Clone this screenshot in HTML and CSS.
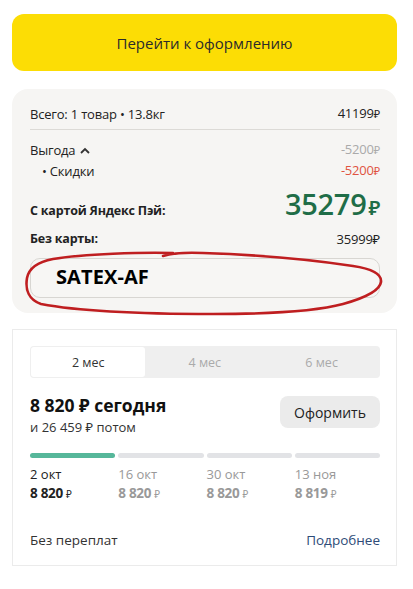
FILE: index.html
```html
<!DOCTYPE html>
<html lang="ru">
<head>
<meta charset="utf-8">
<link rel="stylesheet" href="styles.css">
</head>
<body>
<div class="page">
  <button class="cta">Перейти к оформлению</button>

  <section class="summary">
    <div class="row total">
      <span>Всего: 1 товар • 13.8кг</span>
      <span>41199<span class="rub">₽</span></span>
    </div>
    <div class="divider"></div>
    <div class="row benefit">
      <span>Выгода <svg class="caret" width="10" height="7" viewBox="0 0 10 7"><path d="M1 6 L5 2 L9 6" fill="none" stroke="#333" stroke-width="1.8"/></svg></span>
      <span class="grey">-5200<span class="rub">₽</span></span>
    </div>
    <div class="row sub">
      <span>• Скидки</span>
      <span class="red">-5200<span class="rub">₽</span></span>
    </div>
    <div class="row card-price">
      <span class="bold">С картой Яндекс Пэй:</span>
      <span class="big">35279<span class="bigrub">₽</span></span>
    </div>
    <div class="row nocard">
      <span class="bold">Без карты:</span>
      <span>35999₽</span>
    </div>
    <div class="promo">
      <div class="input">SATEX-AF</div>
      <svg class="circle" width="364" height="70" viewBox="0 0 364 70">
        <path d="M150 3 C120 2 60 4 30 9 C14 12 6 18 4 28 C2 40 6 50 18 54 C60 62 120 64 190 64 C240 64 290 62 320 54 C345 47 357 40 358 32 C359 24 350 19 330 16 C290 10 240 5 180 3 C160 2 150 3 140 6" fill="none" stroke="#bf1e20" stroke-width="2.6" stroke-linecap="round" stroke-linejoin="round"/>
      </svg>
    </div>
  </section>

  <section class="split">
    <div class="tabs">
      <div class="tab active">2 мес</div>
      <div class="tab">4 мес</div>
      <div class="tab">6 мес</div>
    </div>
    <div class="today">
      <div>
        <div class="title">8 820 ₽ сегодня</div>
        <div class="later">и 26 459 ₽ потом</div>
      </div>
      <button class="order">Оформить</button>
    </div>
    <div class="bars">
      <div class="bar on"></div>
      <div class="bar"></div>
      <div class="bar"></div>
      <div class="bar"></div>
    </div>
    <div class="dates">
      <div class="pay first"><div class="d">2 окт</div><div class="a">8 820 <span class="rub">₽</span></div></div>
      <div class="pay"><div class="d">16 окт</div><div class="a">8 820 <span class="rub">₽</span></div></div>
      <div class="pay"><div class="d">30 окт</div><div class="a">8 820 <span class="rub">₽</span></div></div>
      <div class="pay"><div class="d">13 ноя</div><div class="a">8 819 <span class="rub">₽</span></div></div>
    </div>
    <div class="foot">
      <span>Без переплат</span>
      <a class="more">Подробнее</a>
    </div>
  </section>
</div>
</body>
</html>
```

FILE: styles.css
```css
* { box-sizing: border-box; }
body {
  margin: 0;
  background: #fff;
  font-family: "Open Sans", "Noto Sans", sans-serif;
  color: #222;
}
.page { padding: 14px 16px 0 12px; }

.cta {
  display: block;
  width: 100%;
  height: 57px;
  border: 0;
  border-radius: 12px;
  background: #fcdd05;
  font-family: inherit;
  font-size: 15px;
  color: #2b2b2b;
}

.summary {
  position: relative;
  margin-top: 18px;
  background: #f6f5f3;
  border-radius: 16px;
  padding: 14px 17px 15px 18px;
}
.row {
  display: flex;
  justify-content: space-between;
  align-items: center;
  font-size: 13px;
  line-height: 20px;
  letter-spacing: -0.2px;
}
.rub { font-size: 11px; }
.divider { height: 1px; background: #dcdad6; margin: 5px 0 9px; }
.caret { margin-left: 2px; vertical-align: 1px; }
.grey { color: #aaa; }
.red { color: #e0533f; }
.sub { padding-left: 12px; }
.card-price { margin-top: 14px; }
.bold { font-weight: 700; font-size: 12.5px; }
.big {
  font-size: 29px;
  font-weight: 600;
  color: #1f6d47;
  line-height: 38px;
  letter-spacing: -0.3px;
  margin-top: -10px;
}
.bigrub { font-size: 20px; margin-left: 2px; }
.nocard { margin-top: 2px; }
.promo { position: relative; margin-top: 9px; }
.input {
  height: 40px;
  border: 1px solid #d8d6d2;
  border-radius: 10px;
  background: #f7f6f4;
  font-size: 20px;
  font-weight: 700;
  color: #000;
  padding: 0 0 0 25px;
  line-height: 36px;
  letter-spacing: 0.1px;
}
.circle { position: absolute; left: -7px; top: -8px; }

.split {
  margin-top: 16px;
  border: 1px solid #ebebeb;
  padding: 16px 16px 15px 17px;
}
.tabs {
  display: flex;
  background: #efefef;
  border-radius: 4px;
  height: 32px;
}
.tab {
  flex: 1;
  display: flex;
  align-items: center;
  justify-content: center;
  font-size: 12.5px;
  color: #aaa;
}
.tab.active { background: #fff; color: #333; flex: 0.98; border-radius: 3px; margin: 1px; }
.today {
  display: flex;
  justify-content: space-between;
  align-items: center;
  margin-top: 15px;
}
.title { font-size: 17.5px; font-weight: 700; line-height: 24px; color: #111; }
.later { font-size: 13px; line-height: 20px; color: #333; margin-top: 0; }
.order {
  width: 100px;
  height: 32px;
  border: 0;
  border-radius: 8px;
  background: #ebebeb;
  font-family: inherit;
  font-size: 14px;
  color: #222;
  margin-top: -6px;
}
.bars {
  display: flex;
  gap: 3px;
  margin-top: 16px;
}
.bar { flex: 1; height: 5px; border-radius: 3px; background: #e2e3e6; }
.bar.on { background: #56b79a; }
.dates { display: flex; margin-top: 7px; gap: 3px; }
.pay { flex: 1; color: #999; }
.pay.first { color: #222; }
.d { font-size: 13px; line-height: 18px; }
.a { font-size: 13.5px; font-weight: 700; line-height: 20px; letter-spacing: -0.3px; }
.a .rub { font-size: 10px; font-weight: 400; }
.foot {
  display: flex;
  justify-content: space-between;
  margin-top: 26px;
  font-size: 13.5px;
  line-height: 20px;
  color: #333;
}
.more { color: #2e4b78; }
```
